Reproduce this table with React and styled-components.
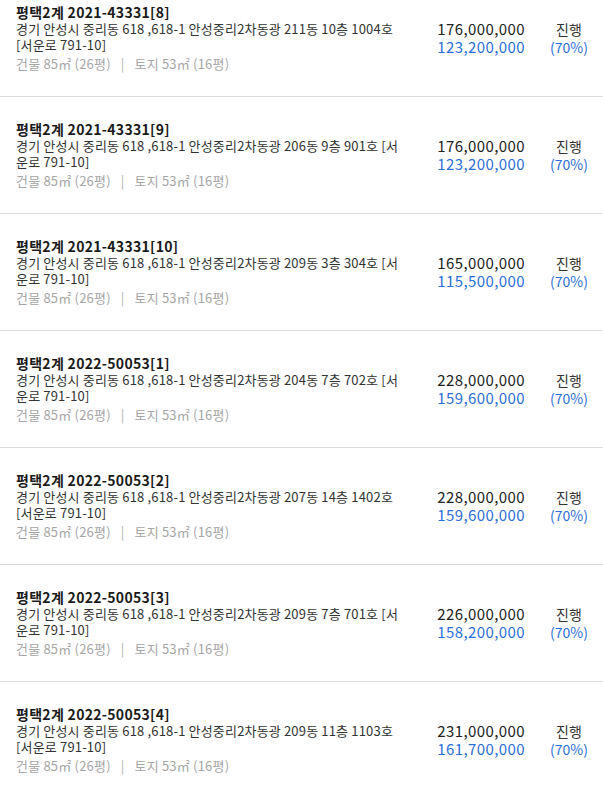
import styled, { createGlobalStyle } from 'styled-components';

const GlobalStyle = createGlobalStyle`
  html, body {
    margin: 0;
    padding: 0;
    background: #fff;
  }
  body {
    font-family: "Noto Sans CJK KR", "Noto Sans", sans-serif;
    color: #333;
  }
`;

const items = [
  { case: '평택2계 2021-43331[8]', address: '경기 안성시 중리동 618 ,618-1 안성중리2차동광 211동 10층 1004호 [서운로 791-10]', appraisal: '176,000,000', minimum: '123,200,000' },
  { case: '평택2계 2021-43331[9]', address: '경기 안성시 중리동 618 ,618-1 안성중리2차동광 206동 9층 901호 [서운로 791-10]', appraisal: '176,000,000', minimum: '123,200,000' },
  { case: '평택2계 2021-43331[10]', address: '경기 안성시 중리동 618 ,618-1 안성중리2차동광 209동 3층 304호 [서운로 791-10]', appraisal: '165,000,000', minimum: '115,500,000' },
  { case: '평택2계 2022-50053[1]', address: '경기 안성시 중리동 618 ,618-1 안성중리2차동광 204동 7층 702호 [서운로 791-10]', appraisal: '228,000,000', minimum: '159,600,000' },
  { case: '평택2계 2022-50053[2]', address: '경기 안성시 중리동 618 ,618-1 안성중리2차동광 207동 14층 1402호 [서운로 791-10]', appraisal: '228,000,000', minimum: '159,600,000' },
  { case: '평택2계 2022-50053[3]', address: '경기 안성시 중리동 618 ,618-1 안성중리2차동광 209동 7층 701호 [서운로 791-10]', appraisal: '226,000,000', minimum: '158,200,000' },
  { case: '평택2계 2022-50053[4]', address: '경기 안성시 중리동 618 ,618-1 안성중리2차동광 209동 11층 1103호 [서운로 791-10]', appraisal: '231,000,000', minimum: '161,700,000' },
];

export default function App() {
  return (
    <>
      <GlobalStyle />
      <List>
        {items.map((item) => (
          <Row key={item.case}>
            <Info>
              <CaseNo>{item.case}</CaseNo>
              <Address>{item.address}</Address>
              <Area>
                건물 85㎡ (26평)
                <Sep>|</Sep>
                토지 53㎡ (16평)
              </Area>
            </Info>
            <Price>
              <span>{item.appraisal}</span>
              <Blue>{item.minimum}</Blue>
            </Price>
            <Status>
              <span>진행</span>
              <Blue>(70%)</Blue>
            </Status>
          </Row>
        ))}
      </List>
    </>
  );
}

const List = styled.ul`
  list-style: none;
  margin: -20px 0 0;
  padding: 0;
`;

const Row = styled.li`
  display: flex;
  align-items: center;
  height: 116px;
  padding-left: 16px;
  border-bottom: 1px solid #dcdcdc;
`;

const Info = styled.div`
  width: 388px;
  margin-right: 30px;
`;

const CaseNo = styled.div`
  font-size: 14px;
  font-weight: 700;
  line-height: 17px;
  letter-spacing: 0.3px;
  color: #1a1a1a;
`;

const Address = styled.div`
  font-size: 13px;
  line-height: 16px;
  letter-spacing: 0.17px;
  color: #333;
  word-break: break-all;
`;

const Area = styled.div`
  margin-top: 3px;
  font-size: 13px;
  line-height: 16px;
  letter-spacing: 0.2px;
  color: #a6a6a6;
`;

const Sep = styled.span`
  margin: 0 10px;
  color: #b0b0b0;
`;

const Price = styled.div`
  display: flex;
  flex-direction: column;
  align-items: flex-end;
  flex: 1;
  margin-right: 10px;
  font-size: 15px;
  line-height: 18px;
  letter-spacing: 0.4px;
  color: #222;
`;

const Status = styled.div`
  display: flex;
  flex-direction: column;
  align-items: center;
  width: 68px;
  font-size: 14px;
  line-height: 18px;
  color: #333;
`;

const Blue = styled.span`
  color: #2d6fd6;
`;
